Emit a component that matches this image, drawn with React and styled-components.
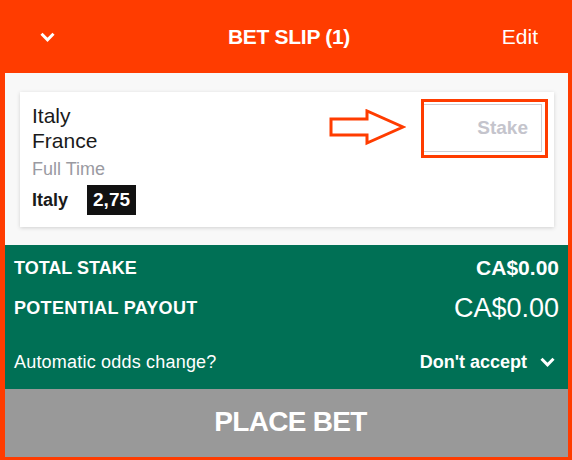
import React from 'react';
import styled, { createGlobalStyle } from 'styled-components';

const ORANGE = '#ff3c00';
const GREEN = '#007055';

const GlobalStyle = createGlobalStyle`
    html, body {
        margin: 0;
        padding: 0;
        background: ${ORANGE};
    }
    * { box-sizing: border-box; }
    body {
        font-family: "Liberation Sans", Arial, sans-serif;
    }
`;

const Frame = styled.div`
    width: 572px;
    height: 460px;
    background: ${ORANGE};
    display: flex;
    flex-direction: column;
`;

/* top bar */
const Header = styled.header`
    height: 73px;
    display: grid;
    grid-template-columns: 1fr auto 1fr;
    align-items: center;
    padding: 0 34px 0 40px;
    color: #fff;
`;

const Title = styled.h1`
    margin: 0;
    font-size: 21px;
    font-weight: 700;
    letter-spacing: -0.3px;
    line-height: 24px;
`;

const EditLink = styled.span`
    justify-self: end;
    font-size: 21px;
    line-height: 24px;
`;

const Chevron = ({ width = 15, height = 10 }) => (
    <svg width={width} height={height} viewBox="0 0 15 10" style={{ display: 'block' }}>
        <path d="M1.5 1.8 L7.5 7.8 L13.5 1.8" fill="none" stroke="#fff" strokeWidth="3" />
    </svg>
);

const Body = styled.div`
    flex: 1;
    margin: 0 4px 3px 5px;
    display: flex;
    flex-direction: column;
`;

const SlipArea = styled.section`
    background: #f8f8f8;
    padding: 19px 14px 18px 15px;
`;

const Card = styled.div`
    background: #fff;
    box-shadow: 0 1px 4px rgba(0, 0, 0, 0.16);
    padding: 11px 12px 12px 12px;
    display: flex;
    justify-content: space-between;
    align-items: flex-start;
    height: 135px;
`;

const Selection = styled.div`
    display: flex;
    flex-direction: column;
`;

const Teams = styled.div`
    font-size: 21px;
    line-height: 25px;
    color: #1a1a1a;
`;

const Market = styled.div`
    margin-top: 6px;
    font-size: 18px;
    line-height: 20px;
    color: #9a9aa2;
`;

const PickRow = styled.div`
    margin-top: 6px;
    display: flex;
    align-items: center;
    gap: 19px;
`;

const Pick = styled.span`
    font-size: 18px;
    font-weight: 700;
    color: #1a1a1a;
`;

const Odds = styled.span`
    height: 30px;
    padding: 0 6px;
    display: flex;
    align-items: center;
    background: #111;
    color: #fff;
    font-size: 19px;
    font-weight: 700;
`;

const StakeWrap = styled.div`
    position: relative;
    margin-top: 1px;
`;

const StakeInput = styled.div`
    width: 119px;
    height: 48px;
    border: 1px solid #cfcfd4;
    display: flex;
    align-items: center;
    justify-content: flex-end;
    padding-right: 13px;
    font-size: 19px;
    font-weight: 700;
    color: #c4c4cc;
`;

/* annotation overlay: red highlight box and arrow */
const Highlight = styled.div`
    position: absolute;
    left: -2px;
    top: -5px;
    right: -6px;
    bottom: -6px;
    border: 3px solid ${ORANGE};
    pointer-events: none;
`;

const ArrowMark = styled.svg`
    position: absolute;
    left: -95px;
    top: 5px;
`;

const Totals = styled.section`
    height: 144px;
    background: ${GREEN};
    color: #fff;
    padding: 11px 9px 0 9px;
    display: flex;
    flex-direction: column;
`;

const TotalRow = styled.div`
    display: flex;
    justify-content: space-between;
    align-items: center;
    height: ${p => p.$h}px;
    margin-top: ${p => p.$gap || 0}px;
`;

const Label = styled.span`
    font-size: 18px;
    font-weight: 700;
    letter-spacing: ${p => (p.$wide ? '0.3px' : '0')};
`;

const Amount = styled.span`
    font-size: ${p => (p.$big ? 27 : 21)}px;
    font-weight: ${p => (p.$big ? 400 : 700)};
`;

const Question = styled.span`
    font-size: 18px;
    letter-spacing: 0.2px;
`;

const Accept = styled.span`
    display: flex;
    align-items: center;
    gap: 13px;
    padding-right: 4px;
    font-size: 18px;
    font-weight: 700;
`;

const PlaceBet = styled.button`
    flex: 1;
    border: none;
    background: #999999;
    color: #fff;
    font-family: inherit;
    font-size: 28px;
    font-weight: 700;
    letter-spacing: -0.7px;
    padding: 0 0 2px 8px;
`;

const App = () => (
    <Frame>
        <GlobalStyle />
        <Header>
            <Chevron />
            <Title>BET SLIP (1)</Title>
            <EditLink>Edit</EditLink>
        </Header>
        <Body>
            <SlipArea>
                <Card>
                    <Selection>
                        <Teams>
                            Italy
                            <br />
                            France
                        </Teams>
                        <Market>Full Time</Market>
                        <PickRow>
                            <Pick>Italy</Pick>
                            <Odds>2,75</Odds>
                        </PickRow>
                    </Selection>
                    <StakeWrap>
                        <StakeInput>Stake</StakeInput>
                        <Highlight />
                        <ArrowMark width="78" height="38" viewBox="0 0 78 38">
                            <polygon
                                points="3,10 39,10 39,2 75,18 39,34 39,26 3,26"
                                fill="#fff"
                                stroke={ORANGE}
                                strokeWidth="3"
                            />
                        </ArrowMark>
                    </StakeWrap>
                </Card>
            </SlipArea>
            <Totals>
                <TotalRow $h={24}>
                    <Label>TOTAL STAKE</Label>
                    <Amount>CA$0.00</Amount>
                </TotalRow>
                <TotalRow $h={32} $gap={12}>
                    <Label $wide>POTENTIAL PAYOUT</Label>
                    <Amount $big>CA$0.00</Amount>
                </TotalRow>
                <TotalRow $h={24} $gap={26}>
                    <Question>Automatic odds change?</Question>
                    <Accept>
                        Don't accept
                        <Chevron />
                    </Accept>
                </TotalRow>
            </Totals>
            <PlaceBet>PLACE BET</PlaceBet>
        </Body>
    </Frame>
);

export default App;
